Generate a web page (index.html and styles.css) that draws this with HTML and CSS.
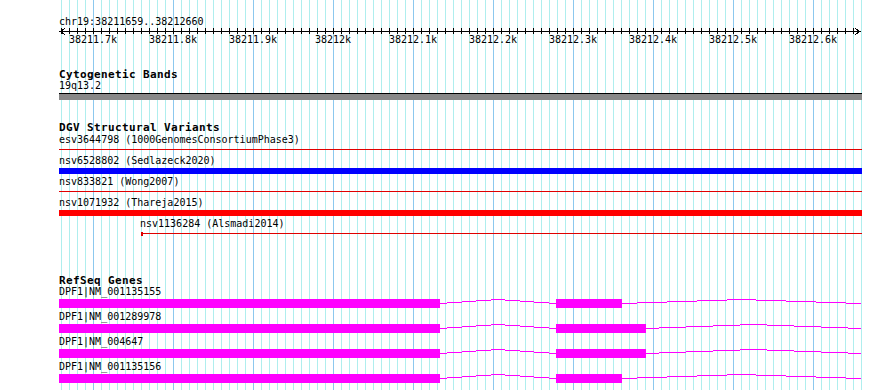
FILE: index.html
```html
<!DOCTYPE html>
<html>
<head>
  <title>Genome Browser</title>
  <meta charset="UTF-8">
  <link rel="stylesheet" href="styles.css">
</head>
<body>
  <div class="browser">
    <!-- base position guidelines, drawn under the tracks -->
    <svg class="guides" width="803" height="390" viewBox="0 0 803 390">
      <defs>
        <pattern id="minorGuide" x="2" y="0" width="8" height="10" patternUnits="userSpaceOnUse">
          <rect x="0" y="0" width="1" height="10" fill="#afeeee"/>
        </pattern>
        <pattern id="majorGuide" x="34" y="0" width="80" height="10" patternUnits="userSpaceOnUse">
          <rect x="0" y="0" width="1" height="10" fill="#8cc8ee"/>
        </pattern>
      </defs>
      <rect width="803" height="390" fill="url(#minorGuide)"/>
      <rect width="803" height="390" fill="url(#majorGuide)"/>
    </svg>

    <div class="ruler">
      <div class="ruler-pos">chr19:38211659..38212660</div>
      <svg class="axis" width="803" height="20" viewBox="0 0 803 20">
        <defs>
          <pattern id="ticks" x="2" y="0" width="8" height="20" patternUnits="userSpaceOnUse">
            <rect x="0" y="1" width="1" height="6" fill="#000"/>
          </pattern>
        </defs>
        <rect x="2" y="0" width="793" height="8" fill="url(#ticks)"/>
        <path d="M1 4.5H801M6 1.5L1 4.5L6 7.5M796 1.5L801 4.5L796 7.5" stroke="#000" fill="none"/>
        <g class="tick-labels">
          <text x="34" y="16">38211.7k</text>
          <text x="114" y="16">38211.8k</text>
          <text x="194" y="16">38211.9k</text>
          <text x="274" y="16">38212k</text>
          <text x="354" y="16">38212.1k</text>
          <text x="434" y="16">38212.2k</text>
          <text x="514" y="16">38212.3k</text>
          <text x="594" y="16">38212.4k</text>
          <text x="674" y="16">38212.5k</text>
          <text x="754" y="16">38212.6k</text>
        </g>
      </svg>
    </div>

    <div class="track track-cyto">
      <div class="track-title">Cytogenetic Bands</div>
      <div class="feat-label">19q13.2</div>
      <div class="band"></div>
    </div>

    <div class="track track-dgv">
      <div class="track-title">DGV Structural Variants</div>
      <div class="sv">
        <div class="feat-label">esv3644798 (1000GenomesConsortiumPhase3)</div>
        <div class="sv-glyph"><div class="sv-line"></div></div>
      </div>
      <div class="sv">
        <div class="feat-label">nsv6528802 (Sedlazeck2020)</div>
        <div class="sv-glyph"><div class="sv-bar sv-blue"></div></div>
      </div>
      <div class="sv">
        <div class="feat-label">nsv833821 (Wong2007)</div>
        <div class="sv-glyph"><div class="sv-line"></div></div>
      </div>
      <div class="sv">
        <div class="feat-label">nsv1071932 (Thareja2015)</div>
        <div class="sv-glyph"><div class="sv-bar sv-red"></div></div>
      </div>
      <div class="sv" style="padding-left: 81px;">
        <div class="feat-label">nsv1136284 (Alsmadi2014)</div>
        <div class="sv-glyph">
          <div class="sv-tick"></div>
          <div class="sv-line"></div>
        </div>
      </div>
    </div>

    <div class="track track-genes">
      <div class="track-title">RefSeq Genes</div>
      <div class="gene">
        <div class="feat-label">DPF1|NM_001135155</div>
        <svg class="gene-glyph" width="803" height="14" viewBox="0 0 803 14">
          <rect x="0" y="2" width="381" height="9"/>
          <rect x="497" y="2" width="66" height="9"/>
          <path d="M381 6.5H388M388 5.5H403M403 4.5H417M417 3.5H432M432 2.5H446M446 3.5H461M461 4.5H475M475 5.5H490M490 6.5H497"/>
          <path d="M563 6.5H578M578 5.5H608M608 4.5H638M638 3.5H668M668 2.5H697M697 3.5H727M727 4.5H757M757 5.5H787M787 6.5H802"/>
        </svg>
      </div>
      <div class="gene">
        <div class="feat-label">DPF1|NM_001289978</div>
        <svg class="gene-glyph" width="803" height="14" viewBox="0 0 803 14">
          <rect x="0" y="2" width="381" height="9"/>
          <rect x="497" y="2" width="90" height="9"/>
          <path d="M381 6.5H388M388 5.5H403M403 4.5H417M417 3.5H432M432 2.5H446M446 3.5H461M461 4.5H475M475 5.5H490M490 6.5H497"/>
          <path d="M587 6.5H600M600 5.5H627M627 4.5H654M654 3.5H681M681 2.5H708M708 3.5H735M735 4.5H762M762 5.5H789M789 6.5H802"/>
        </svg>
      </div>
      <div class="gene">
        <div class="feat-label">DPF1|NM_004647</div>
        <svg class="gene-glyph" width="803" height="14" viewBox="0 0 803 14">
          <rect x="0" y="2" width="381" height="9"/>
          <rect x="497" y="2" width="90" height="9"/>
          <path d="M381 6.5H388M388 5.5H403M403 4.5H417M417 3.5H432M432 2.5H446M446 3.5H461M461 4.5H475M475 5.5H490M490 6.5H497"/>
          <path d="M587 6.5H600M600 5.5H627M627 4.5H654M654 3.5H681M681 2.5H708M708 3.5H735M735 4.5H762M762 5.5H789M789 6.5H802"/>
        </svg>
      </div>
      <div class="gene">
        <div class="feat-label">DPF1|NM_001135156</div>
        <svg class="gene-glyph" width="803" height="14" viewBox="0 0 803 14">
          <rect x="0" y="2" width="381" height="9"/>
          <rect x="497" y="2" width="66" height="9"/>
          <path d="M381 6.5H388M388 5.5H403M403 4.5H417M417 3.5H432M432 2.5H446M446 3.5H461M461 4.5H475M475 5.5H490M490 6.5H497"/>
          <path d="M563 6.5H578M578 5.5H608M608 4.5H638M638 3.5H668M668 2.5H697M697 3.5H727M727 4.5H757M757 5.5H787M787 6.5H802"/>
        </svg>
      </div>
    </div>
  </div>
</body>
</html>
```

FILE: styles.css
```css
body {
  margin: 0;
  overflow: hidden;
  background: #fff;
  color: #000;
  font-family: "DejaVu Sans Mono", "Liberation Mono", monospace;
  font-size: 10px;
  line-height: 11px;
}

.browser {
  position: relative;
  z-index: 0;
  margin-left: 59px;
  width: 803px;
  min-height: 390px;
}

/* sits behind every track */
.guides {
  position: absolute;
  top: 0;
  left: 0;
  z-index: -1;
  shape-rendering: crispEdges;
}

/* ruler */
.ruler {
  padding-top: 16px;
}
.ruler-pos {
  white-space: pre;
}
.axis {
  display: block;
  shape-rendering: crispEdges;
}
.tick-labels text {
  font-family: "DejaVu Sans Mono", "Liberation Mono", monospace;
  font-size: 10px;
  text-anchor: middle;
  fill: #000;
}

/* tracks */
.track-title {
  font-size: 11px;
  font-weight: bold;
  letter-spacing: 0.38px;
  line-height: 11px;
  white-space: pre;
}
.feat-label {
  white-space: pre;
  height: 11px;
}

.track-cyto {
  margin-top: 22px;
}
.band {
  margin-top: 2px;
  height: 6px;
  background-color: #888;
  border-top: 1px solid #000;
}

.track-dgv {
  margin-top: 22px;
}
.track-dgv .track-title {
  line-height: 12px;
}
.sv {
  height: 21px;
}
.sv-glyph {
  display: flex;
  align-items: flex-start;
  height: 10px;
}
.sv-line {
  flex: 1;
  margin-top: 4px;
  height: 1px;
  background-color: #e00000;
}
.sv-bar {
  flex: 1;
  margin-top: 2px;
  height: 6px;
}
.sv-blue {
  background-color: #0000ff;
}
.sv-red {
  background-color: #ff0000;
}
.sv-tick {
  width: 2px;
  height: 4px;
  margin-top: 3px;
  margin-left: 1px;
  background-color: #e00000;
}

.track-genes {
  margin-top: 36px;
}
.gene {
  height: 25px;
}
.gene-glyph {
  display: block;
  shape-rendering: crispEdges;
}
.gene-glyph rect {
  fill: #ff00ff;
}
.gene-glyph path {
  fill: none;
  stroke: #ff00ff;
  stroke-width: 1;
}
```
